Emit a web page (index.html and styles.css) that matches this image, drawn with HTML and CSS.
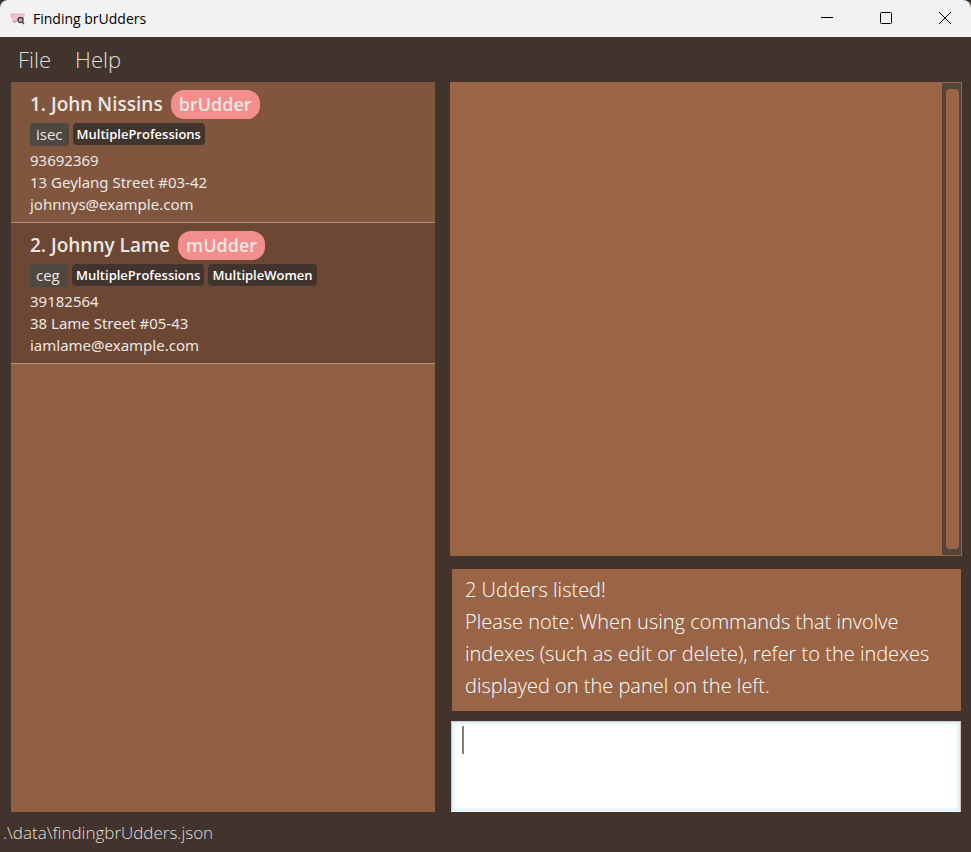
FILE: index.html
```html
<!DOCTYPE html>
<html lang="en">
<head>
<meta charset="utf-8">
<meta name="viewport" content="width=device-width, initial-scale=1">
<title>Finding brUdders</title>
<link rel="stylesheet" href="styles.css">
</head>
<body>
<div class="window">
  <header class="titlebar">
    <svg class="app-icon" viewBox="0 0 16 16" aria-hidden="true">
      <path d="M1 3 H14.500 L13.500 6 L13.500 9.500 L10 10 L5 10 L4 11 L3 10 L2.500 7.500 L1 5.500 Z" fill="#f1c3c9" stroke="#e0b0b8"/>
      <path d="M3 10 L4 11.500 L6 10.500" stroke="#b08a92" fill="none"/>
      <circle cx="10.500" cy="9" r="2.500" fill="#d8a6ae" stroke="#4a4046" stroke-width="1.300"/>
      <path d="M12.300 11 L14 13" stroke="#4a4046" stroke-width="1.400"/>
    </svg>
    <h1 class="title">Finding brUdders</h1>
    <div class="controls">
      <button class="control" type="button" aria-label="Minimize"><svg viewBox="0 0 12 12"><path d="M0 5.500H12"/></svg></button>
      <button class="control" type="button" aria-label="Maximize"><svg viewBox="0 0 12 12"><rect x=".5" y=".5" width="11" height="11" rx="1"/></svg></button>
      <button class="control" type="button" aria-label="Close"><svg viewBox="0 0 12 12"><path d="M0 0L12 12M12 0L0 12"/></svg></button>
    </div>
  </header>
  <nav class="menu">
    <button class="menu-item" type="button">File</button>
    <button class="menu-item" type="button">Help</button>
  </nav>
  <main class="content">
    <ol class="people">
      <li class="person">
        <div class="heading"><h2 class="name">1. John Nissins</h2><span class="role">brUdder</span></div>
        <div class="tags"><span class="major">isec</span><span class="tag">MultipleProfessions</span></div>
        <p class="detail">93692369</p>
        <p class="detail">13 Geylang Street #03-42</p>
        <p class="detail">johnnys@example.com</p>
      </li>
      <li class="person">
        <div class="heading"><h2 class="name">2. Johnny Lame</h2><span class="role">mUdder</span></div>
        <div class="tags"><span class="major">ceg</span><span class="tag">MultipleProfessions</span><span class="tag">MultipleWomen</span></div>
        <p class="detail">39182564</p>
        <p class="detail">38 Lame Street #05-43</p>
        <p class="detail">iamlame@example.com</p>
      </li>
    </ol>
    <div class="side">
      <section class="view" aria-label="Details">
        <div class="track"><div class="thumb"></div></div>
      </section>
      <output class="result">2 Udders listed!<br>Please note: When using commands that involve indexes (such as edit or delete), refer to the indexes displayed on the panel on the left.</output>
      <div class="command">
        <textarea class="command-input" aria-label="Command"></textarea>
        <span class="caret"></span>
      </div>
    </div>
  </main>
  <footer class="status">.\data\findingbrUdders.json</footer>
</div>
</body>
</html>
```
FILE: styles.css
```css
* {
  box-sizing: border-box;
}

body {
  margin: 0;
  background: #41342c;
  font-family: "Open Sans", "Noto Sans", sans-serif;
}

h1, h2, p, ol {
  margin: 0;
  padding: 0;
}

button {
  border: 0;
  background: none;
  font: inherit;
  color: inherit;
}

.window {
  display: flex;
  flex-direction: column;
  min-height: 100vh;
}

.titlebar {
  display: flex;
  align-items: center;
  height: 37px;
  padding-left: 10px;
  gap: 7px;
  background: #f2f2f2;
  border-radius: 8px 8px 0 0;
}

.app-icon {
  width: 16px;
  height: 16px;
}

.title {
  font-size: 14px;
  font-weight: 400;
  color: #000;
}

.controls {
  display: flex;
  height: 100%;
  margin-left: auto;
}

.control {
  display: flex;
  align-items: center;
  justify-content: center;
  width: 59px;
  padding: 0 0 2px 7px;
}

.control svg {
  width: 12px;
  height: 12px;
  fill: none;
  stroke: #000;
}

.menu {
  display: flex;
  height: 45px;
  padding-left: 6px;
}

.menu-item {
  padding: 0 12px 2px;
  font-size: 22px;
  font-weight: 300;
  color: #e0dedd;
}

.content {
  display: grid;
  grid-template-columns: 424fr 512fr;
  gap: 15px;
  flex: 1;
  padding: 0 9px 0 11px;
}

.people {
  background: #915f44;
  list-style: none;
}

.person {
  height: 141px;
  padding: 8px 19px;
  border-bottom: 1px solid #b39478;
  background: #80563e;
  color: #ece7e4;
}

.person:nth-child(even) {
  background: #6c4733;
}

.heading {
  display: flex;
  align-items: center;
  gap: 8px;
  height: 29px;
}

.name, .role {
  font-size: 19px;
  font-weight: 600;
  line-height: 29px;
}

.role {
  padding: 0 8px;
  border-radius: 13px;
  background: #f28e8b;
  font-size: 18px;
}

.tags {
  display: flex;
  align-items: flex-start;
  gap: 4px;
  height: 26px;
  padding-top: 4px;
  margin-bottom: 4px;
}

.major {
  min-width: 38px;
  padding: 0 6px;
  border-radius: 3px;
  background: #4d4840;
  font-size: 15px;
  line-height: 23px;
}

.tag {
  padding: 0 4px;
  border-radius: 4px;
  background: #41342c;
  font-size: 13px;
  font-weight: 600;
  line-height: 22px;
  color: #fff;
}

.detail {
  font-family: "Noto Sans", "Open Sans", sans-serif;
  font-size: 15px;
  line-height: 22px;
}

.side {
  display: flex;
  flex-direction: column;
}

.view {
  display: flex;
  justify-content: flex-end;
  flex: 1;
  padding: 1px;
  background: #9a6546;
}

.track {
  display: flex;
  width: 19px;
  padding: 6px 2px 6px 4px;
  background: #55443a;
}

.thumb {
  flex: 1;
  border-radius: 4px;
  background: #9a6546;
}

.result {
  margin: 13px 1px 10px 2px;
  padding: 5px 12px 9px 13px;
  background: #9a6546;
  font-size: 20px;
  font-weight: 300;
  line-height: 32px;
  color: #fff;
}

.command {
  position: relative;
  height: 91px;
  margin: 0 1px;
}

.command-input {
  display: block;
  width: 100%;
  height: 100%;
  padding: 4px 10px;
  border: 1px solid #cfc9c5;
  border-bottom-color: #fff;
  background: #fff;
  box-shadow: inset 0 0 3px 2px #dceff6;
  font: 300 20px "Open Sans", sans-serif;
  resize: none;
  outline: 0;
}

.caret {
  position: absolute;
  top: 5px;
  left: 11px;
  width: 2px;
  height: 28px;
  background: #808080;
}

.status {
  height: 40px;
  padding-left: 3px;
  font-size: 17px;
  font-weight: 300;
  line-height: 41px;
  color: #e0dedd;
}
```
